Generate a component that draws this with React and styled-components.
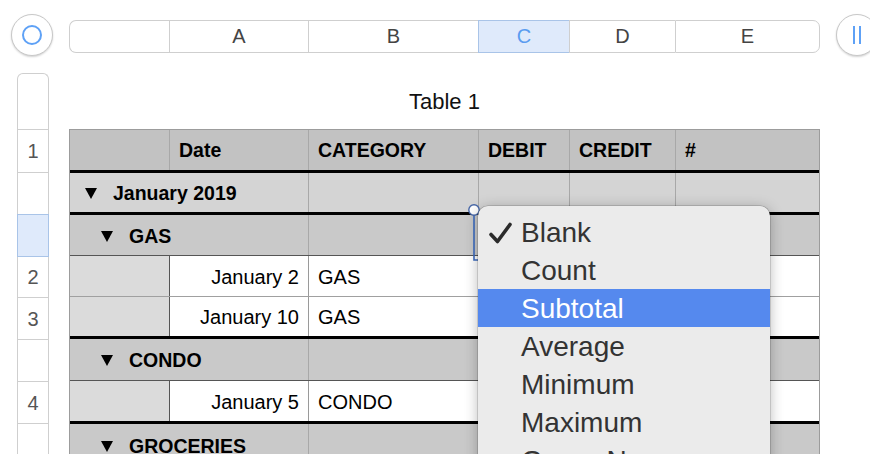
import React from 'react';
import styled, { createGlobalStyle } from 'styled-components';

const Global = createGlobalStyle`
  html, body { margin: 0; padding: 0; background: #fff; overflow: hidden; }
  body { font-family: "Liberation Sans", Arial, sans-serif; }
  #root { width: 870px; height: 454px; overflow: hidden; }
`;

const Page = styled.div`
  position: relative;
  width: 870px;
  height: 454px;
  overflow: hidden;
  background: #fff;
`;

const TopBar = styled.div`
  display: flex;
  align-items: flex-start;
  gap: 16px;
  padding: 14px 0 0 11px;
  height: 42px;
`;

const CircleButton = styled.div`
  flex-shrink: 0;
  width: 42px;
  height: 42px;
  box-sizing: border-box;
  border-radius: 50%;
  border: 1px solid #c8c8c8;
  box-shadow: 0 1px 2px rgba(0, 0, 0, 0.18);
  background: #fff;
  display: flex;
  align-items: center;
  justify-content: center;
  gap: 4px;
`;

const Ring = styled.div`
  width: 20px;
  height: 20px;
  box-sizing: border-box;
  border-radius: 50%;
  border: 2.4px solid #5ea1f6;
`;

const Bar = styled.div`
  width: 2px;
  height: 18px;
  background: #5ea1f6;
`;

const ColBar = styled.div`
  flex-shrink: 0;
  margin-top: 6px;
  display: grid;
  grid-template-columns: 100px 139px 170px 91px 106px 145px;
  height: 33px;
`;

const ColHead = styled.div`
  position: relative;
  box-sizing: border-box;
  display: flex;
  align-items: center;
  justify-content: center;
  border-top: 1px solid #cfcfcf;
  border-bottom: 1px solid #cfcfcf;
  border-left: 1px solid #cfcfcf;
  border-right: ${p => (p.$last ? '1px solid #cfcfcf' : 'none')};
  border-radius: ${p => (p.$first ? '7px 0 0 7px' : p.$last ? '0 7px 7px 0' : '0')};
  background: ${p => (p.$sel ? '#dfeafb' : '#fff')};
  color: ${p => (p.$sel ? '#5a9cf0' : '#444')};
  font-size: 20px;
  &::after {
    content: '';
    display: ${p => (p.$sel ? 'block' : 'none')};
    position: absolute;
    inset: -1px -1px -1px -1px;
    border: 1px solid #a9c4e8;
    pointer-events: none;
  }
`;

const Main = styled.div`
  display: flex;
  gap: 20px;
  padding: 17px 0 0 17px;
`;

const RowHeads = styled.div`
  flex-shrink: 0;
  width: 32px;
  box-sizing: border-box;
  border: 1px solid #cfcfcf;
  border-bottom: none;
  border-radius: 6px 6px 0 0;
  display: flex;
  flex-direction: column;
  height: 400px;
`;

const RowHead = styled.div`
  position: relative;
  flex-shrink: 0;
  height: ${p => p.$h}px;
  box-sizing: border-box;
  border-bottom: 1px solid #cfcfcf;
  display: flex;
  align-items: center;
  justify-content: center;
  padding-top: 1px;
  font-size: 20px;
  color: #555;
  background: ${p => (p.$sel ? '#dfeafb' : 'transparent')};
  &::after {
    content: '';
    display: ${p => (p.$sel ? 'block' : 'none')};
    position: absolute;
    inset: -1px -1px -1px -1px;
    border: 1px solid #a9c4e8;
    pointer-events: none;
  }
`;

const TableArea = styled.div`
  flex-shrink: 0;
  width: 751px;
  display: flex;
  flex-direction: column;
`;

const Title = styled.div`
  height: 56px;
  padding-top: 2px;
  box-sizing: border-box;
  display: flex;
  align-items: center;
  justify-content: center;
  font-size: 22px;
  color: #111;
`;

const Table = styled.div`
  box-sizing: border-box;
  border: 1px solid #9c9c9c;
  border-bottom: none;
`;

const Row = styled.div`
  display: grid;
  grid-template-columns: 99px 139px 170px 91px 106px 144px;
  height: ${p => p.$h}px;
  border-bottom: ${p => p.$bw}px solid ${p => p.$bc};
  background: ${p => p.$bg};
`;

const Cell = styled.div`
  box-sizing: border-box;
  display: flex;
  align-items: center;
  gap: 16px;
  justify-content: ${p => (p.$right ? 'flex-end' : 'flex-start')};
  padding: ${p => p.$pt ?? 2}px 9px 0 ${p => p.$pl ?? 9}px;
  grid-column: span ${p => p.$span || 1};
  border-left: ${p => (p.$first ? 'none' : `1px solid ${p.$div}`)};
  background: ${p => p.$bg || 'transparent'};
  font-size: ${p => (p.$bold ? '19.5px' : '20px')};
  font-weight: ${p => (p.$bold ? 700 : 400)};
  color: #000;
  white-space: nowrap;
  overflow: hidden;
`;

const Tri = styled.span`
  flex-shrink: 0;
  width: 0;
  height: 0;
  border-left: 6px solid transparent;
  border-right: 6px solid transparent;
  border-top: 11px solid #000;
`;

const Menu = styled.div`
  position: absolute;
  left: 478px;
  top: 206px;
  width: 292px;
  height: 290px;
  box-sizing: border-box;
  padding-top: 7px;
  background: #ebebeb;
  border-radius: 10px;
  box-shadow: 0 2px 14px rgba(0, 0, 0, 0.28), 0 0 0 0.5px rgba(0, 0, 0, 0.25);
  overflow: hidden;
`;

const MenuItem = styled.div`
  height: 38px;
  display: flex;
  align-items: center;
  padding-top: 1px;
  box-sizing: border-box;
  background: ${p => (p.$hi ? '#5589ee' : 'transparent')};
  color: ${p => (p.$hi ? '#fff' : '#333')};
  font-size: 28px;
`;

const CheckSlot = styled.span`
  width: 43px;
  flex-shrink: 0;
  display: flex;
  align-items: center;
  padding-left: 11px;
  box-sizing: border-box;
`;

const Handle = styled.svg`
  position: absolute;
  left: 466px;
  top: 202px;
  overflow: visible;
`;

const HDR = '#a8a8a8';

const headerRow = { h: 40, bw: 3, bc: '#000', bg: '#c2c2c2' };

function GroupRow({ label, level, h, bw, bc, bg }) {
  return (
    <Row $h={h} $bw={bw} $bc={bc} $bg={bg}>
      <Cell $first $span={2} $bold $pl={level === 1 ? 15 : 31}>
        <Tri />
        {label}
      </Cell>
      <Cell $div={HDR} />
      <Cell $div={HDR} />
      <Cell $div={HDR} />
      <Cell $div={HDR} />
    </Row>
  );
}

function DataRow({ date, cat, h, bw, bc }) {
  return (
    <Row $h={h} $bw={bw} $bc={bc} $bg="#fff">
      <Cell $first $bg="#dbdbdb" />
      <Cell $div="#555" $right>{date}</Cell>
      <Cell $div="#9a9a9a">{cat}</Cell>
      <Cell $div="#9a9a9a" />
      <Cell $div="#9a9a9a" />
      <Cell $div="#9a9a9a" />
    </Row>
  );
}

const rowHeads = [
  { h: 56, t: '' },
  { h: 43, t: '1' },
  { h: 42, t: '' },
  { h: 42, t: '', sel: true },
  { h: 41, t: '2' },
  { h: 42, t: '3' },
  { h: 42, t: '' },
  { h: 42, t: '4' },
  { h: 60, t: '' },
];

const cols = ['', 'A', 'B', 'C', 'D', 'E'];

const menuItems = ['Blank', 'Count', 'Subtotal', 'Average', 'Minimum', 'Maximum', 'Group Name'];

export default function App() {
  return (
    <Page>
      <Global />
      <TopBar>
        <CircleButton>
          <Ring />
        </CircleButton>
        <ColBar>
          {cols.map((c, i) => (
            <ColHead key={i} $first={i === 0} $last={i === cols.length - 1} $sel={c === 'C'}>
              {c}
            </ColHead>
          ))}
        </ColBar>
        <CircleButton>
          <Bar />
          <Bar />
        </CircleButton>
      </TopBar>
      <Main>
        <RowHeads>
          {rowHeads.map((r, i) => (
            <RowHead key={i} $h={r.h} $sel={r.sel}>{r.t}</RowHead>
          ))}
        </RowHeads>
        <TableArea>
          <Title>Table 1</Title>
          <Table>
            <Row $h={headerRow.h} $bw={headerRow.bw} $bc={headerRow.bc} $bg={headerRow.bg}>
              <Cell $first $pt={0} />
              <Cell $div={HDR} $bold $pt={0}>Date</Cell>
              <Cell $div={HDR} $bold $pt={0}>CATEGORY</Cell>
              <Cell $div={HDR} $bold $pt={0}>DEBIT</Cell>
              <Cell $div={HDR} $bold $pt={0}>CREDIT</Cell>
              <Cell $div={HDR} $bold $pt={0}>#</Cell>
            </Row>
            <GroupRow label="January 2019" level={1} h={39} bw={3} bc="#000" bg="#d4d4d4" />
            <GroupRow label="GAS" level={2} h={40} bw={1} bc="#555" bg="#c9c9c9" />
            <DataRow date="January 2" cat="GAS" h={40} bw={1} bc="#a0a0a0" />
            <DataRow date="January 10" cat="GAS" h={39} bw={3} bc="#000" />
            <GroupRow label="CONDO" level={2} h={41} bw={1} bc="#555" bg="#c9c9c9" />
            <DataRow date="January 5" cat="CONDO" h={40} bw={3} bc="#000" />
            <GroupRow label="GROCERIES" level={2} h={42} bw={1} bc="#555" bg="#c9c9c9" />
          </Table>
        </TableArea>
      </Main>
      <Handle width="16" height="64" viewBox="0 0 16 64">
        <path d="M8 8 L8 58 L12.5 58" fill="none" stroke="#3d6cc0" strokeWidth="1.6" />
        <circle cx="8" cy="8" r="5.2" fill="#fff" stroke="#4767a8" strokeWidth="1.4" />
      </Handle>
      <Menu>
        {menuItems.map((m, i) => (
          <MenuItem key={m} $hi={m === 'Subtotal'}>
            <CheckSlot>
              {i === 0 && (
                <svg width="23" height="22" viewBox="0 0 23 22">
                  <path d="M2 12.5 L8.5 19.5 L21 2.5" fill="none" stroke="#2b2b2b" strokeWidth="3.6" strokeLinecap="round" strokeLinejoin="round" />
                </svg>
              )}
            </CheckSlot>
            {m}
          </MenuItem>
        ))}
      </Menu>
    </Page>
  );
}
